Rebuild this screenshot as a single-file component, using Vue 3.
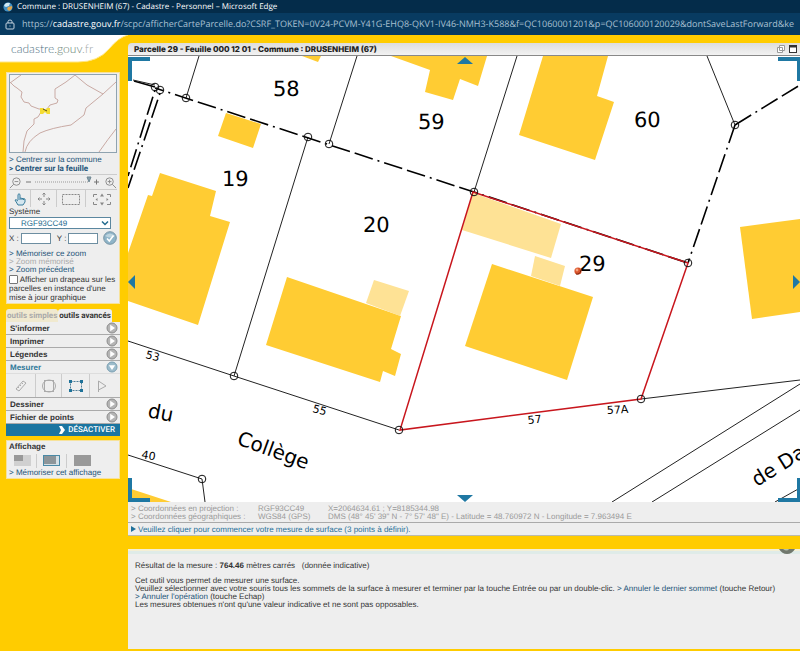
<script setup>
import { ref } from 'vue'

const system = ref('RGF93CC49')
const x = ref('')
const y = ref('')
const flag = ref(false)

const topSections = ["S'informer", 'Imprimer', 'Légendes']
const bottomSections = ['Dessiner', 'Fichier de points']

const parcels = [
  { n: '58', x: 273, y: 96 },
  { n: '59', x: 418, y: 129 },
  { n: '60', x: 634, y: 127 },
  { n: '19', x: 222, y: 186 },
  { n: '20', x: 363, y: 232 },
  { n: '29', x: 579, y: 271 }
]

const marks = [
  [155, 87], [160, 90], [186, 98], [308, 137], [329, 144], [474, 192],
  [735, 125], [688, 263], [641, 399], [399, 430], [234, 376], [202, 479]
]
</script>

<template>
  <div class="page">
    <header class="browser">
      <div class="window-title">
        <svg class="globe" viewBox="0 0 10 10" aria-hidden="true">
          <circle cx="5" cy="5" r="4.6" fill="#3f8fc4" />
          <path d="M2 2Q4 0 7 1L6 4 3 5 1 4Z" fill="#cfe9f5" />
          <path d="M5 5 9 4Q10 7 6 9L4 7Z" fill="#e0a54c" />
        </svg>
        <span>Commune : DRUSENHEIM (67) - Cadastre - Personnel – Microsoft Edge</span>
      </div>
      <div class="address">
        <svg class="lock" viewBox="0 0 10 11" aria-hidden="true">
          <rect x="1" y="4" width="8" height="6" rx="1" />
          <path d="M3 4V2.6Q3 1 5 1T7 2.6V4" />
          <path d="M4.5 7H5.5" />
        </svg>
        <span class="url">https://<b>cadastre.gouv.fr</b>/scpc/afficherCarteParcelle.do?CSRF_TOKEN=0V24-PCVM-Y41G-EHQ8-QKV1-IV46-NMH3-K588&amp;f=QC1060001201&amp;p=QC106000120029&amp;dontSaveLastForward&amp;ke</span>
      </div>
    </header>

    <div class="body">
      <aside class="side">
        <div class="logo">
          <svg class="swoosh" viewBox="0 0 128 29" aria-hidden="true">
            <path d="M0 0H128Q119 2 109 14Q98 27 78 27H0Z" fill="#fff" />
            <path d="M128 0Q119 2 109 14Q98 27 78 27H0" fill="none" stroke="#ffe680" />
          </svg>
          <span class="brand"><span class="b1">cadastre</span><span class="b2">.gouv</span><span class="b3">.fr</span></span>
        </div>

        <section class="panel nav">
          <svg class="minimap" viewBox="0 0 108 79" aria-hidden="true">
            <rect x=".5" y=".5" width="107" height="78" fill="#f3f3f3" stroke="#8fa3b0" />
            <g fill="none" stroke="#c9aaa4" stroke-width="1">
              <path d="M1 9 12 1M1 8 5 12 8 14 13 18 12 23 15 28 20 29 22 32 30 35 35 35" />
              <path d="M38 35 41 31 48 29 49 26 46 24V15L57 8 66 1 78 11 94 20" />
              <path d="M107 8 94 20 77 34 75 41 62 51Q42 54 31 59Q18 67 16 78" />
              <path d="M14 78 15 67 18 57 25 50V45L29 43 32 38 37 36M90 78Q99 65 107 55" />
            </g>
            <path d="M31 34H34L36 36 38 34H41V40H38L36 38 34 40H31Z" fill="#f4dc32" />
            <path d="M34 35 38 37" stroke="#554b12" />
          </svg>
          <nav class="links tall">
            <a href="#commune">&gt; Centrer sur la commune</a>
            <a href="#feuille" class="strong">&gt; Centrer sur la feuille</a>
          </nav>
          <div class="zoom">
            <button aria-label="Zoom arrière">
              <svg viewBox="0 0 14 14"><circle cx="8" cy="6" r="4" /><path d="M5 9 1 13M6 6H10" /></svg>
            </button>
            <svg class="scale" viewBox="0 0 76 14" aria-hidden="true">
              <path d="M1 7H6" stroke="#777" />
              <path d="M10 7H64" stroke="#999" stroke-dasharray="1 1" />
              <path d="M62 2H66L64 7Z" fill="#8aa0ab" stroke="#6f8793" />
              <path d="M69 7H74M71.500 4.500V9.500" stroke="#777" />
            </svg>
            <button aria-label="Zoom avant">
              <svg viewBox="0 0 14 14"><circle cx="6" cy="6" r="4" /><path d="M9 9 13 13M4 6H8M6 4V8" /></svg>
            </button>
          </div>
          <div class="tools">
            <button aria-label="Déplacer">
              <svg viewBox="0 0 20 14"><path d="M8 8V2.500Q9 1 10 2.500V6L15 7V10L13 13H8L5 8Q6 7 8 9M10 6V8M12 6.500V8M13.500 7V8" stroke="#3a7d9c" fill="#d4e6ef" /></svg>
            </button>
            <button aria-label="Centrer">
              <svg viewBox="0 0 20 14"><path d="M10 1V5M10 9V13M4 7H8M12 7H16M8.500 2.500 10 1 11.500 2.500M8.500 11.500 10 13 11.500 11.500M5.500 5.500 4 7 5.500 8.500M14.500 5.500 16 7 14.500 8.500" /></svg>
            </button>
            <button aria-label="Zoom rectangle">
              <svg viewBox="0 0 20 14"><rect x="1.500" y="2.500" width="17" height="10" stroke-dasharray="2 1" /></svg>
            </button>
            <button aria-label="Étendue">
              <svg viewBox="0 0 20 14"><path d="M1.500 5V2.500H5M15 2.500H18.500V5M18.500 10V12.500H15M5 12.500H1.500V10" /><path d="M8 4.500 10 1.500 12 4.500ZM8 10.500 10 13.500 12 10.500ZM5.500 6 3.500 7.500 5.500 9ZM14.500 6 16.500 7.500 14.500 9Z" fill="#888" stroke="none" /></svg>
            </button>
          </div>
          <label class="caption" for="sys">Système</label>
          <div class="select-wrap">
            <select id="sys" v-model="system"><option>RGF93CC49</option></select>
            <svg viewBox="0 0 8 6" aria-hidden="true"><path d="M1 1.500 4 4.500 7 1.500" fill="none" stroke="#236b8e" stroke-width="1.500" /></svg>
          </div>
          <div class="coords">
            <label for="cx">X :</label><input id="cx" v-model="x" type="text">
            <label for="cy">Y :</label><input id="cy" v-model="y" type="text">
            <button class="ok" aria-label="Valider">
              <svg viewBox="0 0 14 14">
                <circle cx="7" cy="7" r="6.300" fill="#8fb4c8" stroke="#7895a5" />
                <path d="M2 5Q7 0 12 5Q8 8 2 5" fill="#bdd4df" />
                <path d="M4 7.500 6.300 10 10.500 4.500" fill="none" stroke="#fff" stroke-width="1.600" />
              </svg>
            </button>
          </div>
          <nav class="links">
            <a href="#save">&gt; Mémoriser ce zoom</a>
            <span class="off">&gt; Zoom mémorisé</span>
            <a href="#prev">&gt; Zoom précédent</a>
          </nav>
          <label class="flag"><input v-model="flag" type="checkbox"> Afficher un drapeau sur les parcelles en instance d'une mise à jour graphique</label>
        </section>

        <div class="tabs">
          <button class="dim">outils simples</button>
          <button>outils avancés</button>
        </div>
        <section class="accordion">
          <button v-for="s in topSections" :key="s" class="row">
            <span>{{ s }}</span>
            <svg viewBox="0 0 12 12"><circle cx="6" cy="6" r="5" fill="#b5b5b5" stroke="#8c8c8c" /><path d="M4.200 2.800 9 6 4.200 9.200Z" fill="#fff" /></svg>
          </button>
          <button class="row open">
            <span>Mesurer</span>
            <svg viewBox="0 0 12 12"><circle cx="6" cy="6" r="5" fill="#9dbccb" stroke="#7a9fb2" /><path d="M2.800 4.200H9.200L6 9Z" fill="#fff" /></svg>
          </button>
          <div class="measures">
            <button aria-label="Distance">
              <svg viewBox="0 0 20 18"><path d="M5 12 12 4 15 6 8 14ZM7 10 8 11M9 8 10 9M11 6 12 7" /></svg>
            </button>
            <button aria-label="Cercle">
              <svg viewBox="0 0 20 18"><rect x="5.500" y="3.500" width="9" height="11" /><ellipse cx="10" cy="9" rx="6.500" ry="6" /></svg>
            </button>
            <button aria-label="Surface">
              <svg viewBox="0 0 20 18"><rect x="4.500" y="4.500" width="11" height="9" stroke-dasharray="2 1" stroke="#4f7f98" /><path d="M3 3H6V6H3ZM14 3H17V6H14ZM3 12H6V15H3ZM14 12H17V15H14Z" fill="#1f7299" stroke="none" /></svg>
            </button>
            <button aria-label="Angle">
              <svg viewBox="0 0 20 18"><path d="M3.500 15V4L11 9 3.500 13" /></svg>
            </button>
          </div>
          <button v-for="s in bottomSections" :key="s" class="row">
            <span>{{ s }}</span>
            <svg viewBox="0 0 12 12"><circle cx="6" cy="6" r="5" fill="#b5b5b5" stroke="#8c8c8c" /><path d="M4.200 2.800 9 6 4.200 9.200Z" fill="#fff" /></svg>
          </button>
          <button class="disable">
            <svg viewBox="0 0 6 8" aria-hidden="true"><path d="M0 0H3L6 4 3 8H0L2 4Z" fill="#fff" /></svg>
            DÉSACTIVER
          </button>
        </section>

        <section class="panel display">
          <h2 class="caption">Affichage</h2>
          <div class="views">
            <button aria-label="Petite carte"><svg viewBox="0 0 17 11"><rect width="17" height="11" fill="#d0d0d0" /><rect width="9" height="6" fill="#999" /></svg></button>
            <button aria-label="Carte moyenne"><svg viewBox="0 0 17 11"><rect x=".5" y=".5" width="16" height="10" fill="#d5dfe4" stroke="#4a8aa6" /><rect x="1" y="1" width="12" height="8" fill="#8d9599" /></svg></button>
            <button aria-label="Grande carte"><svg viewBox="0 0 17 11"><rect width="17" height="11" fill="#999" /></svg></button>
          </div>
          <a href="#layout">&gt; Mémoriser cet affichage</a>
        </section>
      </aside>

      <main class="main">
        <div class="map-title">
          <h1>Parcelle 29 - Feuille 000 12 01 - Commune : DRUSENHEIM (67)</h1>
          <button aria-label="Restaurer"><svg viewBox="0 0 10 10"><path d="M3.500 1.500H8.500V6.500H3.500ZM1.500 3.500H6.500V8.500H1.500Z" fill="#fff" stroke="#999" /></svg></button>
          <button aria-label="Agrandir"><svg viewBox="0 0 10 10"><rect x="1.500" y="1.500" width="7" height="7" fill="#fff" stroke="#333" /><path d="M1 2.500H9" stroke="#333" stroke-width="2" /></svg></button>
        </div>

        <div class="map">
          <svg class="plan" viewBox="128 56 672 446" role="img" aria-label="Plan cadastral">
            <g fill="#ffcc33">
              <path d="M302 56 318 62 321 56Z" />
              <path d="M391 56 430 70 425 92 453 100 460 79 478 86 487 56Z" />
              <path d="M543 56H608L597 96 614 102 595 160 519 135Z" />
              <path d="M226 113 261 124 253 148 218 136Z" />
              <path d="M160 173 216 191 210 216 230 222 198 325 128 301V253L148 195 152 196Z" />
              <path d="M287 277 401 316 391 349 401 354 395 376 383 371 380 382 266 345Z" />
              <path d="M492 264 593 297 567 380 465 346Z" />
              <path d="M740 227 800 219V312L752 319Z" />
              <path d="M128 488 171 502H128Z" />
            </g>
            <g fill="#fee295">
              <path d="M374 280 409 291 400 316 366 303Z" />
              <path d="M473 193 561 224 551 258 462 230Z" />
              <path d="M535 256 565 266 560 286 531 276Z" />
            </g>
            <g class="thin">
              <path d="M199 56 186 98M357 56 329 144M517 56 474 192M707 56 735 125" />
              <path d="M308 137 234 376M128 341 234 376 399 430M128 455 202 479 205 502" />
              <path d="M641 399 800 380M612 502 800 384M652 502 800 410M775 502 800 488" />
            </g>
            <g class="limit">
              <path d="M134 81 155 87" />
              <path d="M155 88 474 192 688 263" stroke-dasharray="19 5 19 5 2 5" stroke-dashoffset="34" />
              <path d="M155 90 128 176M160 93 128 188" stroke-dasharray="19 5 19 5 2 5" stroke-dashoffset="48" />
              <path d="M735 125 688 263" stroke-dasharray="19 5 2 5 19 5" />
              <path d="M735 125 800 85" stroke-dasharray="19 5 2 5 19 5" />
            </g>
            <path class="thin" d="M133 80 155 85" />
            <path class="selection" d="M473 192 688 263 641 399 400 430Z" />
            <circle v-for="m in marks" :key="m.join()" class="mark" :cx="m[0]" :cy="m[1]" r="3.800" />
            <text v-for="p in parcels" :key="p.n" class="parcel" :x="p.x" :y="p.y">{{ p.n }}</text>
            <circle cx="578" cy="271" r="3.600" fill="#d9542b" />
            <circle cx="577" cy="270" r="1.400" fill="#f6a27c" />
            <path d="M576 274Q580 275 581 270" fill="none" stroke="#72210b" />
            <g class="street">
              <text transform="translate(147 417) rotate(11)">du</text>
              <text transform="translate(236 444) rotate(20)">Collège</text>
              <text transform="translate(757 487) rotate(-32)">de Da</text>
            </g>
            <g class="number">
              <text transform="translate(145 358) rotate(14)">53</text>
              <text transform="translate(312 412) rotate(14)">55</text>
              <text transform="translate(528 424) rotate(-6)">57</text>
              <text transform="translate(607 414) rotate(-3)">57A</text>
              <text transform="translate(141 458) rotate(10)">40</text>
            </g>
          </svg>
          <button class="pan corner tl" aria-label="Nord-ouest"></button>
          <button class="pan corner tr" aria-label="Nord-est"></button>
          <button class="pan corner bl" aria-label="Sud-ouest"></button>
          <button class="pan corner br" aria-label="Sud-est"></button>
          <button class="pan up" aria-label="Nord"></button>
          <button class="pan down" aria-label="Sud"></button>
          <button class="pan left" aria-label="Ouest"></button>
          <button class="pan right" aria-label="Est"></button>
        </div>

        <dl class="position">
          <dt>&gt; Coordonnées en projection :</dt><dd>RGF93CC49</dd><dd>X=2064634.61 ; Y=8185344.98</dd>
          <dt>&gt; Coordonnées géographiques :</dt><dd>WGS84 (GPS)</dd><dd>DMS (48° 45' 39" N - 7° 57' 48" E) - Latitude = 48.760972 N - Longitude = 7.963494 E</dd>
        </dl>
        <p class="hint"><svg viewBox="0 0 5 6" aria-hidden="true"><path d="M0 0 5 3 0 6Z" fill="#1f6f99" /></svg>Veuillez cliquer pour commencer votre mesure de surface (3 points à définir).</p>

        <section class="result">
          <svg class="orb" viewBox="0 0 16 6" aria-hidden="true"><path d="M0 0H16Q13 5 8 5T0 0Z" fill="#71786d" /><path d="M4 0H10Q8 3 4 0" fill="#b7c2ad" /></svg>
          <p>Résultat de la mesure : <b>764.46</b> mètres carrés &nbsp; (donnée indicative)</p>
          <div class="help">
            <p>Cet outil vous permet de mesurer une surface.</p>
            <p>Veuillez sélectionner avec votre souris tous les sommets de la surface à mesurer et terminer par la touche Entrée ou par un double-clic. <a href="#undo">&gt; Annuler le dernier sommet</a> (touche Retour)</p>
            <p><a href="#cancel">&gt; Annuler l'opération</a> (touche Echap)</p>
            <p>Les mesures obtenues n'ont qu'une valeur indicative et ne sont pas opposables.</p>
          </div>
        </section>
      </main>
    </div>
  </div>
</template>

<style>
body { background: #fc0; }
</style>

<style scoped>
* { box-sizing: border-box; margin: 0; padding: 0; }
.page { display: flex; flex-direction: column; min-height: 100vh; overflow: hidden; background: #fc0; font: 8px/9px "Liberation Sans", sans-serif; color: #333; text-rendering: geometricPrecision; }
button { border: 0; background: none; font: inherit; color: inherit; text-rendering: inherit; cursor: pointer; }
a { color: #1d5378; text-decoration: none; }
svg { display: block; }

.browser { background: #083b61; color: #fff; font-family: "Open Sans", "Noto Sans", sans-serif; }
.window-title { display: flex; align-items: center; gap: 4px; height: 13px; padding-left: 3px; background: #042c4a; font-size: 8px; line-height: 12px; }
.globe { width: 10px; height: 10px; }
.address { display: flex; align-items: center; gap: 7px; height: 22px; padding-left: 5px; overflow: hidden; }
.lock { flex: none; width: 10px; height: 11px; fill: none; stroke: #c6d4df; }
.url { font-size: 9px; line-height: 12px; white-space: nowrap; color: #a9c0d2; }
.url b { font-weight: 400; color: #fff; }

.body { flex: 1; display: grid; grid-template-columns: 128px minmax(0, 1fr); }
.side { padding-bottom: 8px; }
.logo { display: grid; height: 29px; margin-bottom: 8px; }
.swoosh, .brand { grid-area: 1 / 1; }
.swoosh { width: 128px; height: 29px; }
.brand { padding: 7px 0 0 11px; font: 300 12px/14px Lato, sans-serif; }
.b1 { color: #4d6f80; }
.b2 { color: #657c70; }
.b3 { color: #9fa9a9; }

.panel { margin: 0 8px 0 6px; padding: 1px 2px; background: #eee; border: 1px solid #f7e29a; }
.minimap { width: 108px; height: 79px; }
.links { display: flex; flex-direction: column; line-height: 8px; }
.links.tall { padding: 2px 0 1px; line-height: 9px; }
.strong { font-weight: 700; font-family: Roboto, sans-serif; }
.off { color: #aaa; }
.zoom { display: flex; align-items: center; justify-content: space-between; height: 16px; border-top: 1px solid #ccc; border-bottom: 1px solid #ccc; }
.zoom svg { height: 13px; fill: none; stroke: #888; }
.zoom .scale { width: 76px; height: 14px; }
.tools { display: grid; grid-template-columns: 22px 26px 29px 1fr; height: 17px; }
.tools button, .measures button { display: grid; place-items: center; border-right: 1px solid #ccc; }
.tools button:last-child, .measures button:last-child { border-right: 0; }
.tools svg { width: 20px; height: 14px; fill: none; stroke: #888; }
.caption { display: block; font-size: 8px; line-height: 10px; font-weight: 400; }
.select-wrap { display: grid; align-items: center; width: 102px; }
.select-wrap select { grid-area: 1 / 1; appearance: none; height: 12px; padding-left: 11px; border: 1px solid #5b87a0; border-radius: 0; background: #fff; color: #236b8e; font: inherit; text-rendering: inherit; }
.select-wrap svg { grid-area: 1 / 1; justify-self: end; width: 8px; height: 6px; margin-right: 2px; pointer-events: none; }
.coords { display: flex; align-items: center; gap: 2px; height: 18px; }
.coords label { width: 10px; white-space: nowrap; }
.coords input { width: 30px; height: 11px; border: 1px solid #6d8ea1; background: #fff; font: inherit; }
.coords label[for="cy"] { margin-left: 4px; }
.coords .ok { margin-left: 3px; }
.ok svg { width: 14px; height: 14px; }
.coords + .links { padding: 3px 0 1px; }
.flag { display: block; margin-right: -2px; font-size: 8px; line-height: 9px; }
.flag input { appearance: none; width: 9px; height: 9px; vertical-align: top; border: 1px solid #777; border-radius: 1px; background: #fff; }

.tabs { display: flex; align-items: flex-end; height: 18px; margin-left: 6px; }
.tabs button { height: 13px; padding: 0 1px; background: #eee; border-radius: 3px 3px 0 0; font: 700 8px/12px Roboto, sans-serif; white-space: nowrap; }
.tabs .dim { color: #aaa; background: #f0e9cf; }
.accordion { margin: 0 8px 4px 6px; background: #eee; }
.row { display: flex; align-items: center; justify-content: space-between; width: 100%; height: 13px; padding: 0 2px 0 4px; border-bottom: 1px solid #aaa; font-weight: 700; text-align: left; }
.row svg { width: 12px; height: 12px; }
.row.open { color: #2e7899; border-bottom-color: #ddd; }
.measures { display: grid; grid-template-columns: 30px 26px 28px 1fr; height: 24px; border-bottom: 1px solid #aaa; }
.measures svg { width: 20px; height: 18px; fill: none; stroke: #aaa; }
.disable { display: flex; align-items: center; justify-content: flex-end; gap: 3px; width: 100%; height: 12px; padding-right: 5px; background: #1b75a0; color: #fff; font: 500 8px/12px Roboto, sans-serif; }
.disable svg { width: 6px; height: 8px; }
.display .caption { font-weight: 700; }
.views { display: grid; grid-template-columns: 28px 30px 1fr; height: 17px; align-items: center; }
.views button { display: grid; justify-items: center; align-items: center; height: 14px; border-right: 1px solid #ccc; }
.views button:last-child { border: 0; justify-items: start; padding-left: 7px; }
.views svg { width: 17px; height: 11px; }
.display a { display: block; line-height: 8px; }

.main { display: flex; flex-direction: column; padding-top: 8px; padding-bottom: 2px; }
.map-title { display: flex; align-items: center; gap: 2px; height: 13px; padding: 0 2px 0 6px; border-bottom: 1px solid #888; border-radius: 4px 0 0 0; background: linear-gradient(#ddd, #f2f2f2); }
h1 { flex: 1; font: 800 8px/12px Inter, sans-serif; color: #222; }
.map-title svg { width: 10px; height: 10px; }
.map { position: relative; background: #fff; overflow: hidden; }
.plan { width: 100%; height: auto; }
.thin { fill: none; stroke: #222; stroke-width: 1; }
.limit { fill: none; stroke: #000; stroke-width: 1.600; }
.selection { fill: none; stroke: #c8161d; stroke-width: 1.500; }
.mark { fill: none; stroke: #111; stroke-width: 1; }
.plan text { font-family: "DejaVu Sans", sans-serif; fill: #000; }
.parcel { font-size: 21px; }
.street { font-size: 20px; }
.number { font-size: 11px; }
.pan { position: absolute; }
.corner { width: 22px; height: 24px; border: 0 solid #1f78a3; }
.tl { top: 1px; left: 0; border-width: 4px 0 0 4px; }
.tr { top: 1px; right: 0; border-width: 4px 3px 0 0; }
.bl { bottom: 0; left: 0; border-width: 0 0 4px 4px; }
.br { bottom: 0; right: 0; border-width: 0 3px 4px 0; }
.up, .down { left: calc(50% - 7px); width: 16px; height: 7px; background: #1f78a3; }
.up { top: 1px; clip-path: polygon(50% 0, 100% 100%, 0 100%); }
.down { bottom: 0; clip-path: polygon(0 0, 100% 0, 50% 100%); }
.left, .right { top: calc(50% - 4px); width: 7px; height: 14px; background: #1f78a3; }
.left { left: 0; clip-path: polygon(0 50%, 100% 0, 100% 100%); }
.right { right: 0; clip-path: polygon(0 0, 100% 50%, 0 100%); }

.position { display: grid; grid-template-columns: 127px 70px 1fr; padding: 3px 0 1px 3px; border-bottom: 1px solid #aaa; background: #eee; color: #999; font-size: 8px; line-height: 8px; white-space: nowrap; }
.hint { display: flex; align-items: center; gap: 2px; height: 13px; padding-left: 3px; border-bottom: 1px solid #bba; background: #eee; color: #1f6f99; }
.hint svg { width: 5px; height: 6px; }
.result { position: relative; flex: 1; margin-top: 13px; padding: 9px 7px 8px; border-top: 2px solid #f4efd5; background: #eee; line-height: 8px; }
.result::before { content: ""; display: block; margin: -9px -7px 8px; height: 3px; background: #dfebe8; }
.orb { position: absolute; top: -2px; right: 5px; width: 16px; height: 6px; }
.help { margin-top: 7px; }
</style>
